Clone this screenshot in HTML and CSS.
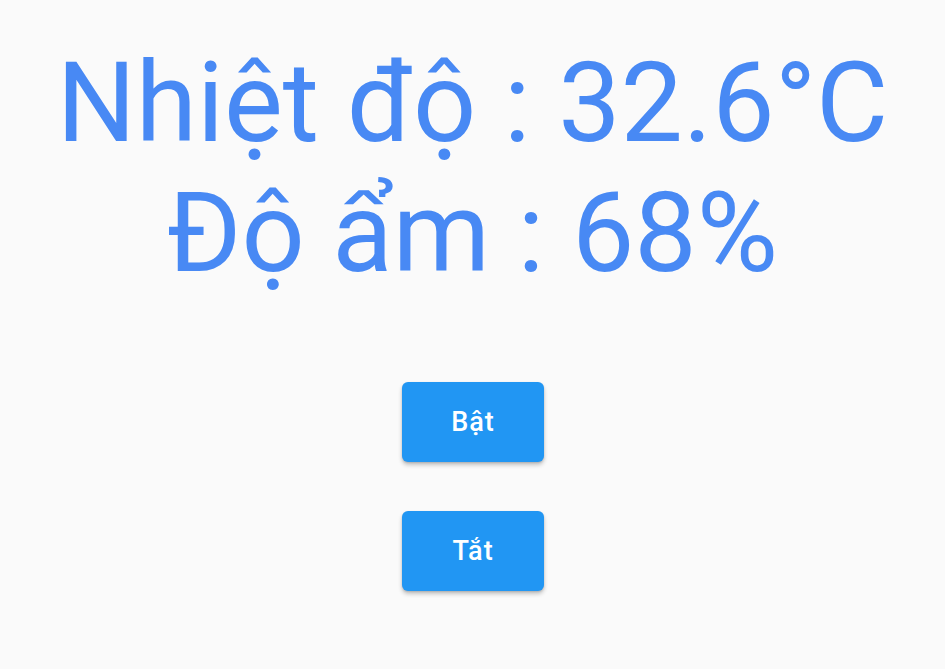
FILE: index.html
```html
<!DOCTYPE html>
<html lang="vi">
<head>
<meta charset="utf-8">
<link rel="stylesheet" href="styles.css">
</head>
<body>
<main class="screen">
  <div class="readings">
    <div class="reading">Nhiệt độ : 32.6°C</div>
    <div class="reading">Độ ẩm : 68%</div>
  </div>
  <div class="actions">
    <button class="btn">Bật</button>
    <button class="btn">Tắt</button>
  </div>
</main>
</body>
</html>
```
FILE: styles.css
```css
html, body {
  margin: 0;
  padding: 0;
  background: #fafafa;
}
body {
  font-family: Roboto, "Noto Sans", sans-serif;
  width: 945px;
  height: 669px;
  overflow: hidden;
}
.screen {
  display: flex;
  flex-direction: column;
  align-items: center;
  padding-top: 38px;
}
.readings {
  display: flex;
  flex-direction: column;
  align-items: center;
}
.reading {
  font-size: 111px;
  line-height: 130px;
  font-weight: 400;
  color: #4889f4;
  white-space: nowrap;
}
.actions {
  margin-top: 84px;
  display: flex;
  flex-direction: column;
  align-items: center;
  gap: 49px;
}
.btn {
  width: 142px;
  height: 80px;
  border: none;
  border-radius: 6px;
  background: #2196f3;
  color: #ffffff;
  font-family: Roboto, "Noto Sans", sans-serif;
  font-size: 27px;
  font-weight: 500;
  letter-spacing: 1px;
  padding: 0 0 0 1px;
  box-shadow: 0 3px 4px rgba(0,0,0,0.22), 0 1px 2px rgba(0,0,0,0.12);
  cursor: pointer;
}
```
